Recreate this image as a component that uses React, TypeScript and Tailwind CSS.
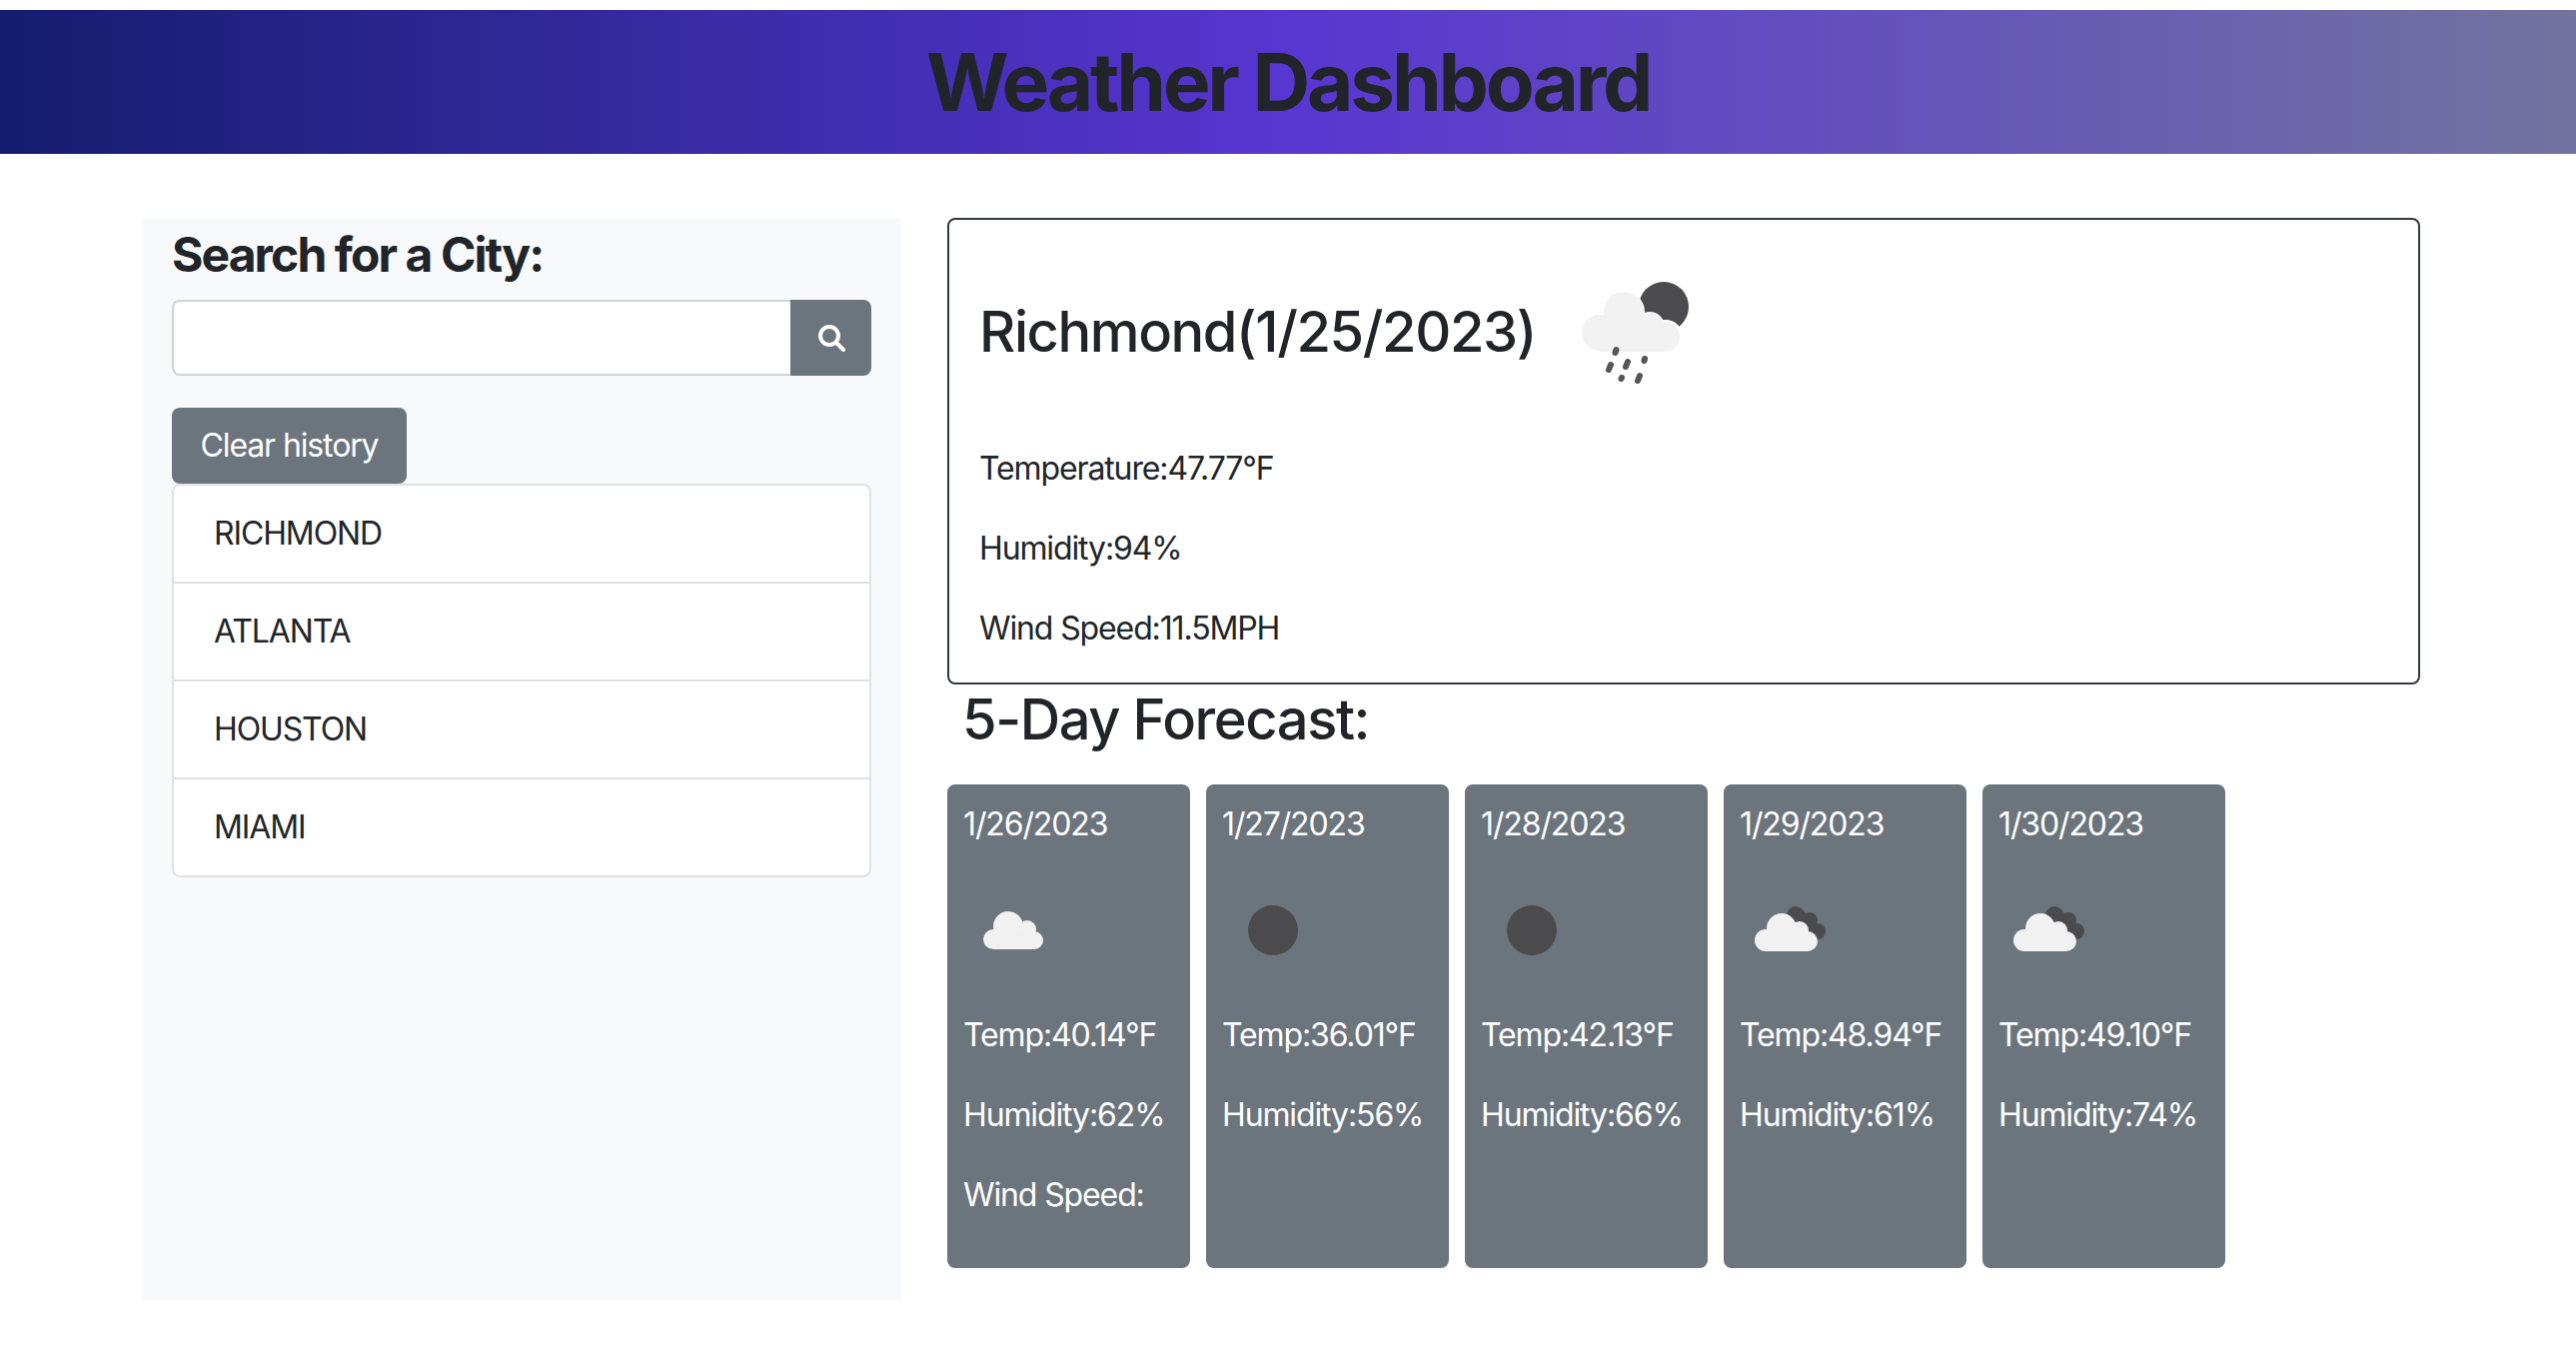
const Cloud = () => (
  <g fill="#f1f1f1">
    <circle cx="45" cy="46" r="15" />
    <circle cx="64" cy="49" r="9" />
    <circle cx="71" cy="60" r="9" />
    <circle cx="30" cy="59" r="10" />
    <rect x="30" y="55" width="41" height="14" />
  </g>
);

const CloudIcon = () => (
  <svg viewBox="0 0 100 100" className="w-[100px] h-[100px] block"><Cloud /></svg>
);

const MoonIcon = () => (
  <svg viewBox="0 0 100 100" className="w-[100px] h-[100px] block"><circle cx="51" cy="50" r="25" fill="#4b4b4d" /></svg>
);

const BrokenIcon = () => (
  <svg viewBox="0 0 100 100" className="w-[100px] h-[100px] block">
    <g fill="#4b4b4d">
      <circle cx="56" cy="35" r="9" />
      <circle cx="70" cy="40" r="8" />
      <circle cx="78" cy="51" r="8" />
      <path d="M50 38 L60 27 L84 50 L76 59 L62 60 Z" />
    </g>
    <g fill="#f1f1f1">
      <circle cx="42" cy="48" r="15" />
      <circle cx="60" cy="50" r="9" />
      <circle cx="68" cy="61" r="10" />
      <circle cx="26" cy="60" r="11" />
      <rect x="26" y="56" width="42" height="15" />
    </g>
  </svg>
);

const RainIcon = () => (
  <svg viewBox="0 0 160 160" className="w-[160px] h-[160px] block shrink-0">
    <circle cx="111" cy="55" r="25" fill="#4b4b4d" />
    <g fill="#ffffff">
      <circle cx="71" cy="60" r="21" />
      <circle cx="97" cy="75" r="15" />
      <circle cx="113" cy="85" r="17" />
    </g>
    <g fill="#f2f2f2">
      <circle cx="71" cy="60" r="20" />
      <circle cx="47" cy="81" r="18" />
      <circle cx="97" cy="75" r="14" />
      <circle cx="112" cy="85" r="15" />
      <rect x="47" y="72" width="65" height="28" />
    </g>
    <g stroke="#555557" strokeWidth="6" strokeLinecap="round">
      <path d="M63.5 98 L62.5 101" />
      <path d="M58 113 L56 118" />
      <path d="M75 110 L73 115" />
      <path d="M92 107 L91.5 109" />
      <path d="M69 126 L68.5 127" />
      <path d="M87 124 L85 129" />
    </g>
  </svg>
);

const days = [
  { d: "1/26/2023", icon: <CloudIcon />, t: "40.14", h: "62", wind: true },
  { d: "1/27/2023", icon: <MoonIcon />, t: "36.01", h: "56" },
  { d: "1/28/2023", icon: <MoonIcon />, t: "42.13", h: "66" },
  { d: "1/29/2023", icon: <BrokenIcon />, t: "48.94", h: "61" },
  { d: "1/30/2023", icon: <BrokenIcon />, t: "49.10", h: "74" },
];

export default function App() {
  return (
    <div className="min-h-[1360px] bg-white text-[#212529] text-[32px] leading-[48px] pt-[10px] font-['Inter','Liberation_Sans',sans-serif] tracking-[-0.035em]">
      <header className="h-[144px] flex items-center justify-center bg-[linear-gradient(to_right,#141d6e,#5836d2_50%,#72739f)]">
        <h1 className="text-[80px] leading-[96px] font-bold tracking-[-0.04em]">Weather Dashboard</h1>
      </header>
      <main className="flex items-start mt-[64px] pl-[142px]">
        <aside className="w-[760px] h-[1083px] bg-[#f8f9fa] px-[30px] pt-[8px] shrink-0">
          <h2 className="text-[48px] leading-[58px] font-bold mb-[16px] tracking-[-0.04em]">Search for a City:</h2>
          <div className="flex h-[76px] mb-[32px]">
            <input className="flex-1 min-w-0 bg-white border-2 border-[#ced4da] rounded-l-[8px] border-r-0" aria-label="Search" />
            <button className="w-[81px] bg-[#6c757d] rounded-r-[8px] flex items-center justify-center" aria-label="search">
              <svg viewBox="0 0 28 28" className="w-[28px] h-[28px]" fill="none" stroke="#ffffff" strokeWidth="4" strokeLinecap="round">
                <circle cx="12" cy="12" r="9" />
                <path d="M19 19 L26 26" />
              </svg>
            </button>
          </div>
          <button className="block w-[235px] h-[76px] bg-[#6c757d] text-white rounded-[8px]">Clear history</button>
          <ul className="border-2 border-[#dfe2e5] rounded-[8px] bg-white">
            {["RICHMOND", "ATLANTA", "HOUSTON", "MIAMI"].map((c, i) => (
              <li key={c} className={"h-[96px] pl-[40px] flex items-center " + (i < 3 ? "border-b-2 border-[#dfe2e5] h-[98px]" : "")}>{c}</li>
            ))}
          </ul>
        </aside>
        <section className="ml-[46px] w-[1474px] shrink-0">
          <div className="h-[467px] border-2 border-[#343a40] rounded-[8px] pl-[30px] pt-[32px]">
            <div className="flex items-center h-[160px] mb-[33px]">
              <h2 className="text-[56px] leading-[67px] font-medium w-[574px] tracking-[-0.025em]">Richmond(1/25/2023)</h2>
              <RainIcon />
            </div>
            <p className="mb-[32px]">Temperature:47.77°F</p>
            <p className="mb-[32px]">Humidity:94%</p>
            <p>Wind Speed:11.5MPH</p>
          </div>
          <h3 className="text-[56px] leading-[67px] font-medium pl-[15px] mt-[2px] mb-[31px] tracking-[-0.025em]">5-Day Forecast:</h3>
          <div className="flex gap-[16px]">
            {days.map((x) => (
              <div key={x.d} className="w-[243px] h-[484px] bg-[#6c757d] text-white rounded-[8px] p-[16px]">
                <div className="mb-[32px]">{x.d}</div>
                <div className="mb-[31px]">{x.icon}</div>
                <p className="mb-[32px]">Temp:{x.t}°F</p>
                <p className="mb-[32px]">Humidity:{x.h}%</p>
                {x.wind && <p>Wind Speed:</p>}
              </div>
            ))}
          </div>
        </section>
      </main>
    </div>
  );
}
